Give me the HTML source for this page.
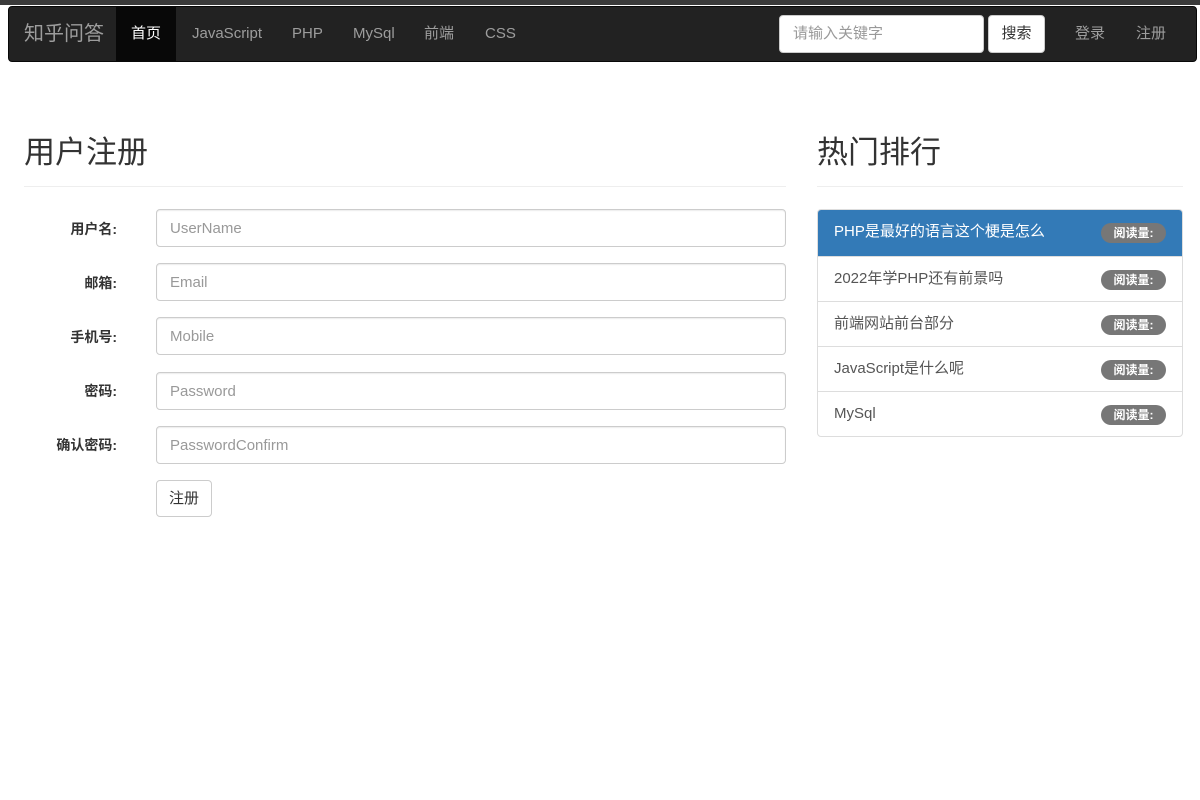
<!DOCTYPE html>
<html><head><meta charset="utf-8"><style>
*{box-sizing:border-box}
body{margin:0;width:1200px;height:800px;background:#fff;font-family:"Liberation Sans","Noto Sans CJK SC",sans-serif;font-size:14px;color:#333;position:relative;overflow:hidden}
.top{position:absolute;left:0;top:0;width:1200px;height:5px;background:#3a3a3a}
.nav{position:absolute;left:8px;top:6px;width:1189px;height:56px;background:#222;border:1px solid #080808;border-radius:4px}
.nav a{position:absolute;top:0;height:54px;line-height:54px;color:#9d9d9d;font-size:15px}
.brand{font-size:20px!important;left:15px}
.active{background:#080808;color:#fff!important;padding:0 15px}
.search{position:absolute;left:770px;top:8px;width:205px;height:38px;background:#fff;border:1px solid #ccc;border-radius:4px;color:#999;font-size:15px;line-height:36px;padding-left:13px}
.btn{position:absolute;background:#fff;border:1px solid #ccc;border-radius:4px;color:#333;font-size:15px;text-align:center}
h1{position:absolute;margin:0;font-weight:400;font-size:31px;color:#333}
.hr{position:absolute;height:1px;background:#eee}
.lbl{position:absolute;width:117px;text-align:right;font-weight:bold;font-size:14px}
.inp{position:absolute;left:156px;width:630px;height:38px;border:1px solid #ccc;border-radius:4px;color:#999;font-size:15px;line-height:38px;padding-left:13px;box-shadow:inset 0 1px 1px rgba(0,0,0,.075)}
.list{position:absolute;left:817px;top:209px;width:366px;border:1px solid #ddd;border-radius:4px;overflow:hidden}
.item{height:45px;border-top:1px solid #ddd;padding:0 16px;line-height:44px;font-size:15px;position:relative;color:#555}
.item:first-child{border-top:0;background:#337ab7;color:#fff;height:46px}
.badge{position:absolute;right:16px;top:13px;height:20px;width:65px;border-radius:10px;background:#777;color:#fff;font-size:12px;font-weight:bold;line-height:20px;text-align:center}
</style></head><body>
<div class="top"></div>
<div class="nav">
<a class="brand">知乎问答</a>
<a class="active" style="left:107px">首页</a>
<a style="left:183px">JavaScript</a>
<a style="left:283px">PHP</a>
<a style="left:344px">MySql</a>
<a style="left:415px">前端</a>
<a style="left:476px">CSS</a>
<div class="search">请输入关键字</div>
<div class="btn" style="left:979px;top:8px;width:57px;height:38px;line-height:36px">搜索</div>
<a style="left:1066px">登录</a>
<a style="left:1127px">注册</a>
</div>
<h1 style="left:24px;top:127px">用户注册</h1>
<div class="hr" style="left:24px;top:186px;width:762px"></div>
<h1 style="left:817px;top:127px">热门排行</h1>
<div class="hr" style="left:817px;top:186px;width:366px"></div>
<div class="lbl" style="top:219px">用户名:</div><div class="inp" style="top:209px">UserName</div>
<div class="lbl" style="top:273px">邮箱:</div><div class="inp" style="top:263px">Email</div>
<div class="lbl" style="top:327px">手机号:</div><div class="inp" style="top:317px">Mobile</div>
<div class="lbl" style="top:381px">密码:</div><div class="inp" style="top:372px">Password</div>
<div class="lbl" style="top:435px">确认密码:</div><div class="inp" style="top:426px">PasswordConfirm</div>
<div class="btn" style="left:156px;top:480px;width:56px;height:37px;line-height:35px">注册</div>
<div class="list">
<div class="item">PHP是最好的语言这个梗是怎么<span class="badge">阅读量:</span></div>
<div class="item">2022年学PHP还有前景吗<span class="badge">阅读量:</span></div>
<div class="item">前端网站前台部分<span class="badge">阅读量:</span></div>
<div class="item">JavaScript是什么呢<span class="badge">阅读量:</span></div>
<div class="item">MySql<span class="badge">阅读量:</span></div>
</div>
</body></html>
